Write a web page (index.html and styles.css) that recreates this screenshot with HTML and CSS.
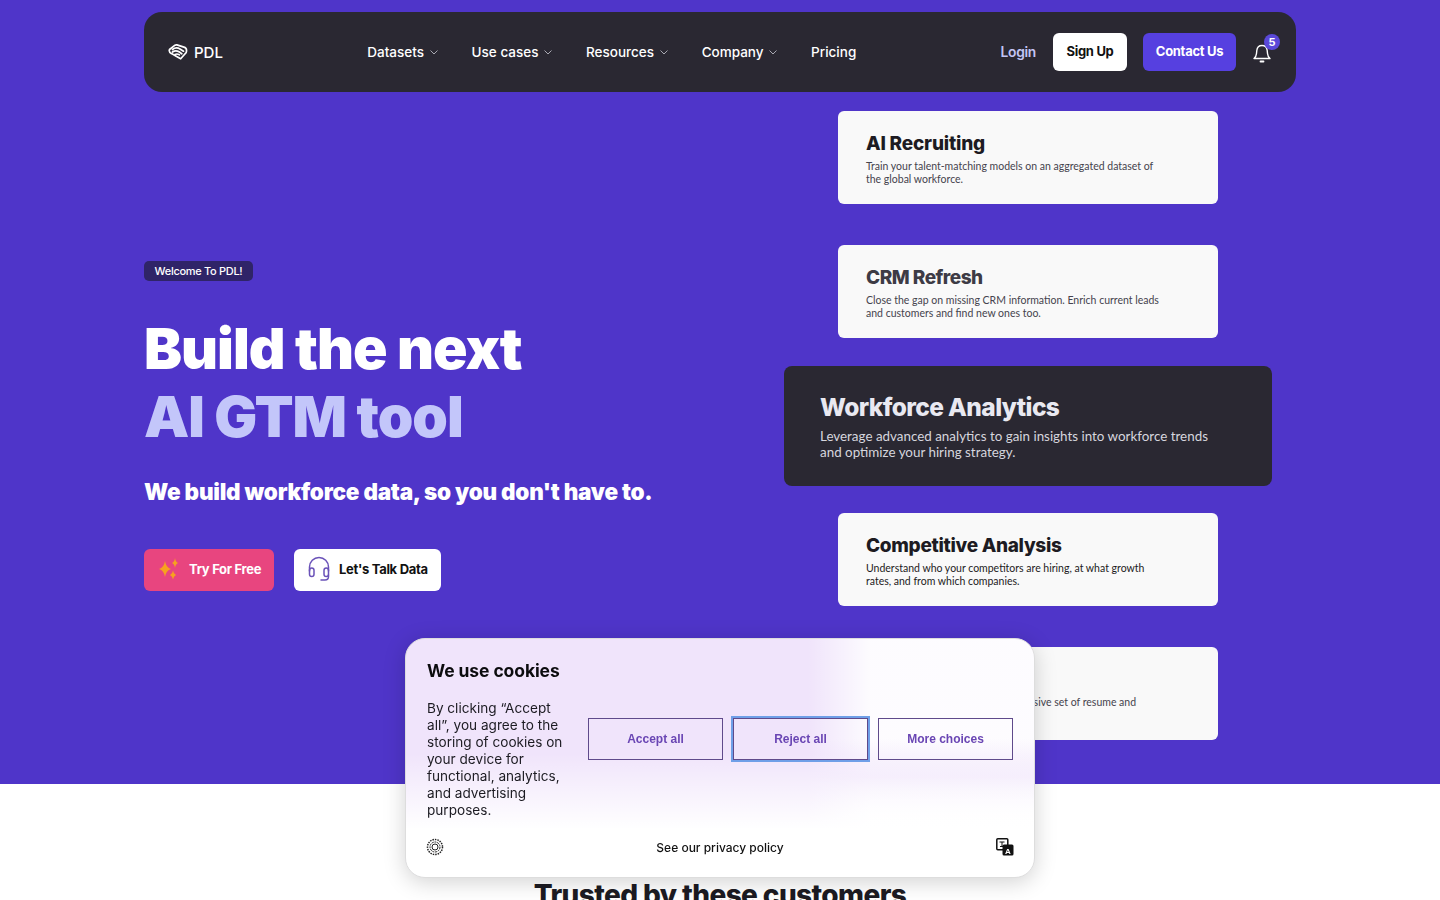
FILE: index.html
```html
<!DOCTYPE html>
<html lang="en">
  <head>
    <meta charset="UTF-8" />
    <meta name="viewport" content="width=device-width, initial-scale=1.0" />
    <title>People Data Labs</title>
    <link rel="stylesheet" href="styles.css">
  </head>
  <body>
    <section class="hero">
      <nav class="nav">
        <a class="logo" href="#">
          <svg width="20" height="18" viewBox="0 0 20 18" fill="none" stroke="#fff" stroke-width="1.7" stroke-linejoin="round" stroke-linecap="round">
            <path d="M1.5 6.5 7 2.2c.6-.4 1.2-.5 1.9-.3l7 2.2c1 .3 2.6 1.6 2.6 2.8v1.3c0 1-.6 2-1.4 2.6l-4.4 5-3.2-1.9-6-3.300C1.900 9.900 1 8 1.500 6.500Z"/>
            <path d="M4.500 6.500c2.500-2 5-2 7.500-.5l3.500 2.200"/>
            <path d="M4.500 9c2-1.500 4.500-1.500 6.500-.2l2.800 2"/>
            <path d="M7 11.500c1.500-.8 3-.6 4.500.4"/>
          </svg>
          <span>PDL</span>
        </a>
        <div class="nav-links">
          <a href="#">Datasets <svg class="chev" width="8" height="5" viewBox="0 0 8 5"><path d="M.5.5 4 4 7.500.5" fill="none" stroke="#a9a9b2"/></svg></a>
          <a href="#">Use cases <svg class="chev" width="8" height="5" viewBox="0 0 8 5"><path d="M.5.5 4 4 7.500.5" fill="none" stroke="#a9a9b2"/></svg></a>
          <a href="#">Resources <svg class="chev" width="8" height="5" viewBox="0 0 8 5"><path d="M.5.5 4 4 7.500.5" fill="none" stroke="#a9a9b2"/></svg></a>
          <a href="#">Company <svg class="chev" width="8" height="5" viewBox="0 0 8 5"><path d="M.5.5 4 4 7.500.5" fill="none" stroke="#a9a9b2"/></svg></a>
          <a href="#">Pricing</a>
        </div>
        <div class="nav-actions">
          <a class="login" href="#">Login</a>
          <a class="btn btn-white" href="#">Sign Up</a>
          <a class="btn btn-violet" href="#">Contact Us</a>
          <div class="bell">
            <svg width="18" height="20" viewBox="0 0 18 20" fill="none" stroke="#fff" stroke-width="1.4" stroke-linecap="round" stroke-linejoin="round">
              <path d="M1 15.500c1.500-1.200 2.300-2.800 2.500-5l.3-3C4.100 4.500 6.300 2.500 9 2.500s4.900 2 5.200 5l.3 3c.2 2.200 1 3.800 2.500 5H1Z"/>
              <path d="M7.500 18.500h3" stroke-width="1.8"/>
            </svg>
            <span class="badge">5</span>
          </div>
        </div>
      </nav>

      <div class="hero-body">
        <div class="hero-copy">
          <span class="tag">Welcome To PDL!</span>
          <h1>Build the next<br><span class="accent">AI GTM tool</span></h1>
          <p class="sub">We build workforce data, so you don't have to.</p>
          <div class="cta">
            <a class="cta-btn cta-pink" href="#">
              <svg width="24" height="24" viewBox="0 0 24 24" fill="#f7a11f">
                <path d="M9 4Q10 10.500 15 12 10 13.500 9 20 8 13.500 3 12 8 10.500 9 4Z"/>
                <path d="M19 1Q19.500 5 22 6 19.500 7 19 11 18.500 7 16 6 18.500 5 19 1Z"/>
                <path d="M17 13.500Q17.500 17 20 18 17.500 19 17 22.500 16.500 19 14 18 16.500 17 17 13.500Z"/>
              </svg>
              Try For Free
            </a>
            <a class="cta-btn cta-white" href="#">
              <svg width="24" height="26" viewBox="0 0 24 26" fill="none" stroke="#6a52b8" stroke-width="1.5" stroke-linecap="round">
                <path d="M2.500 15V11a9.500 9.500 0 0 1 19 0v4"/>
                <rect x="2.5" y="12" width="4.5" height="8.5" rx="2.25"/>
                <rect x="17" y="12" width="4.5" height="8.5" rx="2.25"/>
                <path d="M21.500 19v1.500c0 2-1.500 3.500-3.500 3.500h-4"/>
              </svg>
              Let's Talk Data
            </a>
          </div>
        </div>

        <div class="cards">
          <div class="card">
            <h3>AI Recruiting</h3>
            <p>Train your talent-matching models on an aggregated dataset of<br>the global workforce.</p>
          </div>
          <div class="card card-faded">
            <h3>CRM Refresh</h3>
            <p>Close the gap on missing CRM information. Enrich current leads<br>and customers and find new ones too.</p>
          </div>
          <div class="card card-active">
            <h3>Workforce Analytics</h3>
            <p>Leverage advanced analytics to gain insights into workforce trends<br>and optimize your hiring strategy.</p>
          </div>
          <div class="card card-strong">
            <h3>Competitive Analysis</h3>
            <p>Understand who your competitors are hiring, at what growth<br>rates, and from which companies.</p>
          </div>
          <div class="card">
            <h3>Resume Data</h3>
            <p>Gain direct access to our comprehensive set of resume and<br>job data.</p>
          </div>
        </div>
      </div>
    </section>

    <section class="customers">
      <h2>Trusted by these customers</h2>
    </section>

    <div class="cookie">
      <h4>We use cookies</h4>
      <div class="cookie-main">
        <p>By clicking “Accept all”, you agree to the storing of cookies on your device for functional, analytics, and advertising purposes.</p>
        <div class="cookie-btns">
          <button>Accept all</button>
          <button class="focused">Reject all</button>
          <button>More choices</button>
        </div>
      </div>
      <div class="cookie-foot">
        <svg width="18" height="18" viewBox="0 0 18 18" fill="none" stroke="#222">
          <circle cx="9" cy="9" r="7.5" stroke-width="1.5" stroke-dasharray="1.5 1"/>
          <circle cx="9" cy="9" r="5" stroke-width="1" stroke-dasharray="2 .8"/>
          <circle cx="9" cy="9" r="3" stroke-width="1"/>
        </svg>
        <a href="#">See our privacy policy</a>
        <svg width="18" height="18" viewBox="0 0 18 18">
          <rect x=".8" y=".8" width="11" height="11" rx="1" fill="#fff" stroke="#111" stroke-width="1.5"/>
          <path d="M3.500 4h5M6 4v4.500M4 8.500h4" fill="none" stroke="#111"/>
          <rect x="6.5" y="6.5" width="11" height="11" rx="1.5" fill="#111"/>
          <text x="12" y="15.5" class="lang-a">A</text>
        </svg>
      </div>
    </div>
  </body>
</html>
```

FILE: styles.css
```css
* {
  box-sizing: border-box;
}
body {
  margin: 0;
  font-family: Inter, sans-serif;
  background: #fff;
  color: #1c1b22;
}
a {
  color: inherit;
  text-decoration: none;
}

/* hero */
.hero {
  height: 784px;
  background: #4f35c9;
  padding: 12px 144px 0;
}
.nav {
  height: 80px;
  background: #2a2832;
  border-radius: 18px;
  padding: 0 24px;
  display: flex;
  align-items: center;
  justify-content: space-between;
  color: #fff;
}
.logo {
  display: flex;
  align-items: center;
  gap: 6px;
  font-size: 15px;
  font-weight: 500;
}
.nav-links {
  display: flex;
  align-items: center;
  gap: 34px;
  font-size: 13.5px;
  font-weight: 500;
}
.chev {
  margin-left: 2px;
  vertical-align: 2px;
}
.nav-actions {
  display: flex;
  align-items: center;
  font-weight: 700;
  font-size: 13px;
  letter-spacing: -0.3px;
}
.login {
  color: #c2c5f6;
  font-size: 13.8px;
  font-weight: 600;
  margin-right: 17px;
  padding-bottom: 1px;
}
.btn {
  height: 38px;
  display: flex;
  align-items: center;
  justify-content: center;
  padding-bottom: 2px;
  border-radius: 6px;
}
.btn-white {
  width: 74px;
  background: #fff;
  color: #111;
  margin-right: 16px;
}
.btn-violet {
  width: 93px;
  background: #5640e0;
  color: #fff;
  margin-right: 17px;
}
.bell {
  position: relative;
  width: 19px;
  height: 20px;
  margin-top: 2px;
}
.badge {
  position: absolute;
  left: 11px;
  top: -9px;
  width: 16px;
  height: 16px;
  border-radius: 50%;
  background: #5a48d8;
  color: #fff;
  font-size: 11px;
  letter-spacing: 0;
  line-height: 16px;
  text-align: center;
}

.hero-body {
  margin-top: 19px;
  padding-right: 24px;
  display: grid;
  grid-template-columns: 1fr 488px;
  align-items: center;
}
.hero-copy {
  color: #fff;
}
.tag {
  display: block;
  width: 109px;
  height: 20px;
  background: #2f2468;
  border-radius: 5px;
  font-size: 11px;
  font-weight: 500;
  line-height: 20px;
  letter-spacing: -0.3px;
  text-align: center;
}
h1 {
  margin: 34px 0 0;
  font-size: 57px;
  font-weight: 900;
  line-height: 68px;
  letter-spacing: -1px;
}
.accent {
  color: #c3c6fa;
}
.sub {
  margin: 25px 0 0;
  font-size: 22.5px;
  font-weight: 900;
  line-height: 32px;
  letter-spacing: -0.25px;
}
.cta {
  display: flex;
  gap: 20px;
  margin-top: 41px;
}
.cta-btn {
  height: 42px;
  display: flex;
  align-items: center;
  padding-bottom: 1px;
  border-radius: 6px;
  font-size: 13px;
  font-weight: 700;
  letter-spacing: -0.3px;
}
.cta-pink {
  width: 130px;
  padding-left: 12px;
  gap: 9px;
  background: #e8457f;
}
.cta-white {
  width: 147px;
  padding-left: 13px;
  gap: 8px;
  background: #fff;
  color: #111;
}

/* use case cards */
.cards {
  display: flex;
  flex-direction: column;
  align-items: center;
  gap: 41px;
}
.card {
  width: 380px;
  height: 93px;
  padding: 21px 28px 0;
  background: #f9f9f9;
  border-radius: 6px;
}
.card h3 {
  margin: 0;
  font-size: 19px;
  font-weight: 800;
  line-height: 24px;
  letter-spacing: -0.2px;
  color: #1d1b22;
}
.card p {
  margin: 4px 0 0;
  font-family: Lato, sans-serif;
  font-size: 10.5px;
  line-height: 13px;
  color: #45434d;
  white-space: nowrap;
}
.card-faded h3 {
  color: #3d3b45;
  letter-spacing: -0.5px;
}
.card-strong h3 {
  letter-spacing: -0.3px;
}
.card-strong p {
  color: #1d1b22;
}
.card-active {
  width: 488px;
  height: 120px;
  margin: -13px 0 -14px;
  padding: 25px 36px 0;
  background: #2a2832;
  border-radius: 8px;
}
.card-active h3 {
  font-size: 24.5px;
  line-height: 32px;
  letter-spacing: -0.6px;
  color: #e9e9f1;
}
.card-active p {
  margin-top: 5px;
  font-size: 13.4px;
  line-height: 16px;
  color: #d6d6de;
}

.customers {
  padding-top: 93px;
  text-align: center;
}
.customers h2 {
  margin: 0;
  font-size: 28px;
  font-weight: 800;
  line-height: 36px;
  letter-spacing: -0.6px;
}

/* cookie banner */
.cookie {
  position: fixed;
  left: 405px;
  top: 638px;
  width: 630px;
  height: 240px;
  padding: 21px 21px 0;
  border: 1px solid #ddd;
  border-radius: 20px;
  box-shadow: 0 4px 22px rgba(0, 0, 0, 0.18);
  background:
    linear-gradient(to bottom, rgba(255, 255, 255, 0) 48%, #fff 80%),
    linear-gradient(to bottom, rgba(240, 228, 251, 0) 42%, rgba(240, 228, 251, 0.85) 58%, rgba(240, 228, 251, 0) 74%),
    linear-gradient(to right, rgba(255, 255, 255, 0) 64%, rgba(255, 255, 255, 0.88) 74%),
    #f0e4fb;
}
.cookie h4 {
  margin: 0;
  font-size: 17.5px;
  font-weight: 700;
  line-height: 22px;
  letter-spacing: -0.1px;
  color: #0c0c0e;
}
.cookie-main {
  display: flex;
  gap: 21px;
  margin-top: 18px;
}
.cookie-main p {
  width: 140px;
  margin: 0;
  flex-shrink: 0;
  font-size: 13.6px;
  line-height: 17px;
  color: #1c1b22;
}
.cookie-btns {
  flex: 1;
  display: flex;
  gap: 10px;
  margin-top: 18px;
}
.cookie-btns button {
  flex: 1;
  height: 42px;
  background: transparent;
  border: 1px solid #5f4a8b;
  color: #6a46b4;
  font-family: "Liberation Sans", sans-serif;
  font-size: 12px;
  font-weight: 700;
}
.cookie-btns .focused {
  outline: 2px solid #6f9fe8;
}
.cookie-foot {
  display: flex;
  align-items: center;
  justify-content: space-between;
  margin: 19px -1px 0 -1px;
  font-size: 12px;
  font-weight: 500;
  color: #111;
}
.lang-a {
  font-family: "Liberation Sans", sans-serif;
  font-size: 8px;
  font-weight: 700;
  fill: #fff;
  text-anchor: middle;
}
```
